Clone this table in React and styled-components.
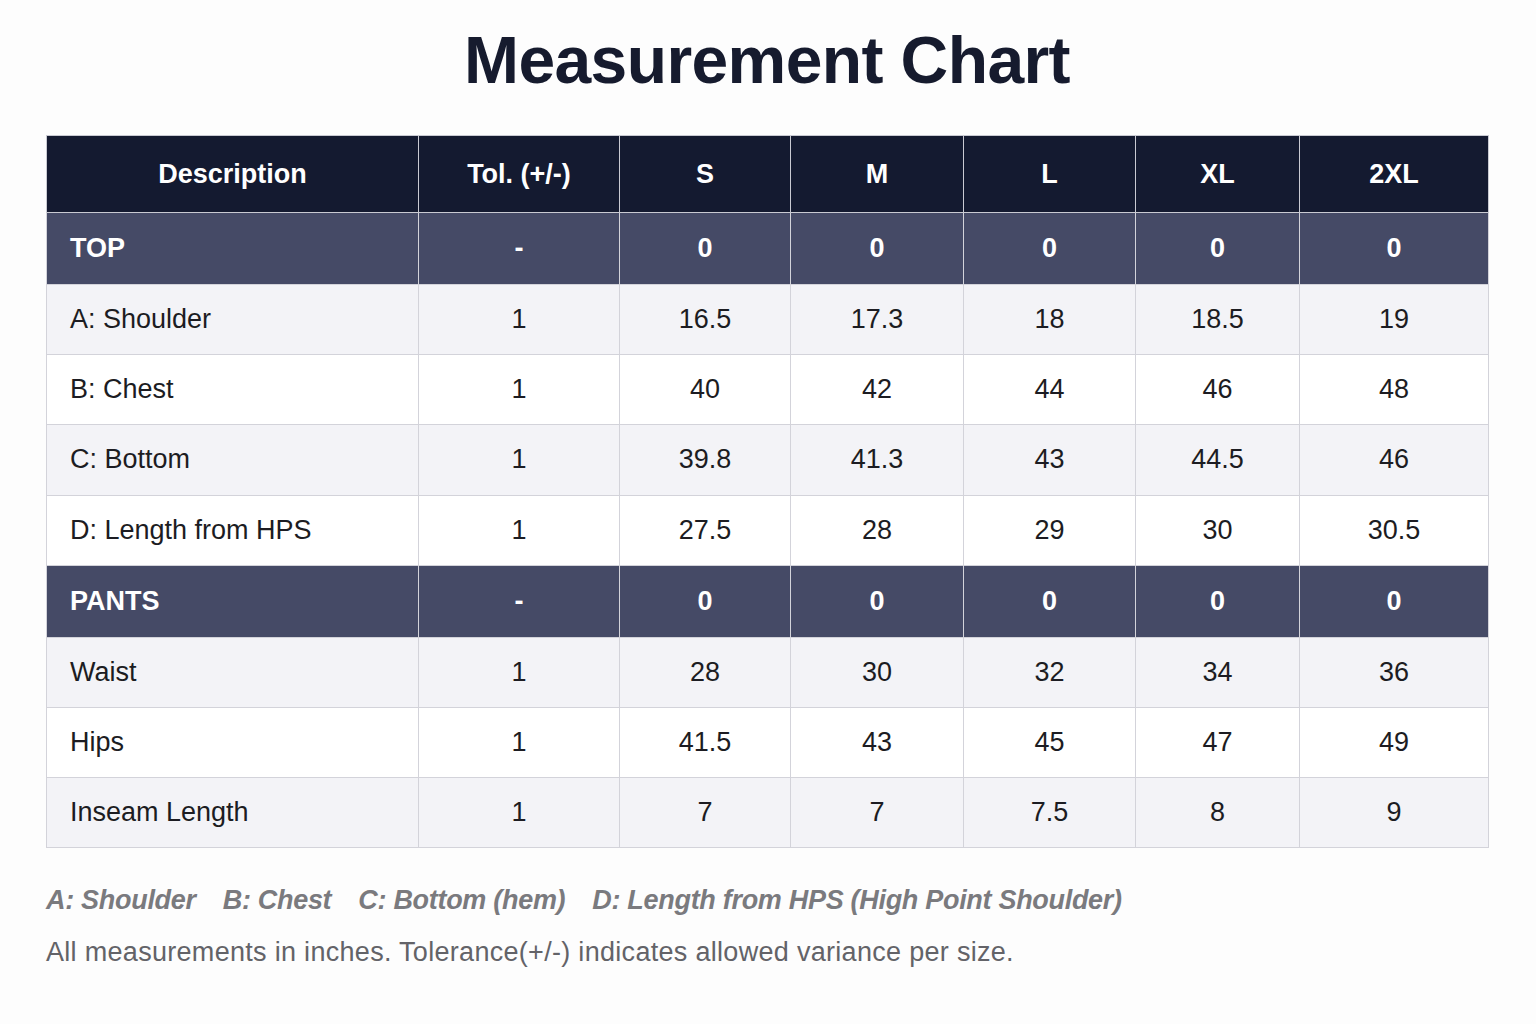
import React from "react";
import styled, { createGlobalStyle } from "styled-components";

const GlobalStyle = createGlobalStyle`
	body {
		margin: 0;
		background: #fdfdfd;
		font-family: "Liberation Sans", Arial, sans-serif;
	}
`;

const Page = styled.div`
	width: 1536px;
	height: 1024px;
	box-sizing: border-box;
	padding: 22px 48px 0 46px;
`;

const Title = styled.h1`
	margin: 0 0 36px;
	text-align: center;
	font-size: 66px;
	line-height: 77px;
	font-weight: 700;
	letter-spacing: -0.6px;
	color: #161b2e;
`;

const Table = styled.table`
	width: 1442px;
	border-collapse: collapse;
	table-layout: fixed;
	border: 1px solid #d3d3da;
`;

const HeadCell = styled.th`
	height: 76px;
	padding: 0;
	background: #141a30;
	color: #fff;
	font-size: 27px;
	font-weight: 700;
	text-align: center;
	border: 1px solid #c9cad2;
`;

const Row = styled.tr`
	background: ${({ $section, $alt }) =>
		$section ? "#454a66" : $alt ? "#f3f3f7" : "#ffffff"};
	color: ${({ $section }) => ($section ? "#fff" : "#1c1c22")};
	font-weight: ${({ $section }) => ($section ? 700 : 400)};
`;

const Cell = styled.td`
	height: ${({ $section }) => ($section ? "71px" : "69.2px")};
	padding: 0;
	font-size: 27px;
	text-align: center;
	border: 1px solid #d3d3da;
`;

const DescCell = styled(Cell)`
	text-align: left;
	padding-left: 23px;
`;

const Legend = styled.div`
	display: flex;
	gap: 27px;
	margin-top: 37px;
	font-size: 27px;
	line-height: 30px;
	font-style: italic;
	font-weight: 700;
	color: #7a7a7e;
	letter-spacing: -0.3px;
`;

const Note = styled.p`
	margin: 22px 0 0;
	font-size: 27px;
	line-height: 30px;
	letter-spacing: 0.3px;
	color: #636368;
`;

const widths = [372, 201, 171, 173, 172, 164, 189];
const heads = ["Description", "Tol. (+/-)", "S", "M", "L", "XL", "2XL"];

const rows = [
	{ section: true, cells: ["TOP", "-", "0", "0", "0", "0", "0"] },
	{ cells: ["A: Shoulder", "1", "16.5", "17.3", "18", "18.5", "19"] },
	{ cells: ["B: Chest", "1", "40", "42", "44", "46", "48"] },
	{ cells: ["C: Bottom", "1", "39.8", "41.3", "43", "44.5", "46"] },
	{ cells: ["D: Length from HPS", "1", "27.5", "28", "29", "30", "30.5"] },
	{ section: true, cells: ["PANTS", "-", "0", "0", "0", "0", "0"] },
	{ cells: ["Waist", "1", "28", "30", "32", "34", "36"] },
	{ cells: ["Hips", "1", "41.5", "43", "45", "47", "49"] },
	{ cells: ["Inseam Length", "1", "7", "7", "7.5", "8", "9"] },
];

const App = () => {
	let alt = false;
	return (
		<>
			<GlobalStyle />
			<Page>
				<Title>Measurement Chart</Title>
				<Table>
					<colgroup>
						{widths.map((w, i) => (
							<col key={i} style={{ width: w }} />
						))}
					</colgroup>
					<thead>
						<tr>
							{heads.map((h) => (
								<HeadCell key={h}>{h}</HeadCell>
							))}
						</tr>
					</thead>
					<tbody>
						{rows.map((r, i) => {
							if (r.section) alt = false;
							else alt = !alt;
							return (
								<Row key={i} $section={r.section} $alt={alt}>
									{r.cells.map((c, j) =>
										j === 0 ? (
											<DescCell key={j} $section={r.section}>
												{c}
											</DescCell>
										) : (
											<Cell key={j} $section={r.section}>
												{c}
											</Cell>
										)
									)}
								</Row>
							);
						})}
					</tbody>
				</Table>
				<Legend>
					<span>A: Shoulder</span>
					<span>B: Chest</span>
					<span>C: Bottom (hem)</span>
					<span>D: Length from HPS (High Point Shoulder)</span>
				</Legend>
				<Note>
					All measurements in inches. Tolerance(+/-) indicates allowed variance per size.
				</Note>
			</Page>
		</>
	);
};

export default App;
